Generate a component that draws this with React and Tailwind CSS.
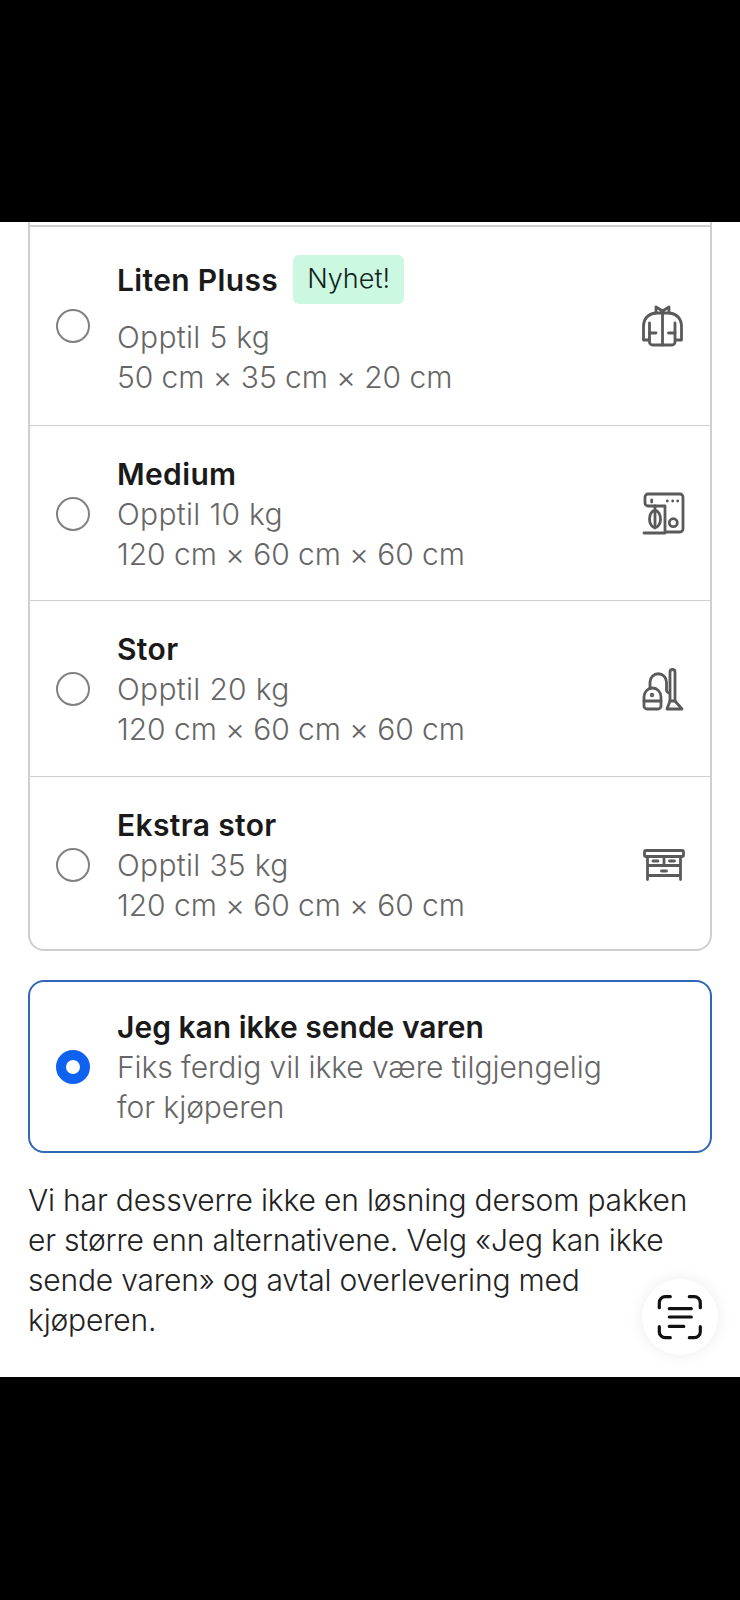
const font = { fontFamily: '"Inter", "Liberation Sans", sans-serif' };

const Jacket = () => (
  <svg width="48" height="48" viewBox="20 12 48 48" fill="none" stroke="#5a5a5a" strokeWidth="2.8" strokeLinejoin="round" strokeLinecap="round">
    <path d="M36 17 L42.5 21 L49 17 V23 H36 Z" />
    <path d="M36 23 C28 24 23.5 29 23.5 37 V50 H29.5 V33 M29.5 50 V52 a3 3 0 0 0 3 3 H52 a3 3 0 0 0 3 -3 V33 M55 50 H61.5 V37 C61.5 29 57 24 49 23" />
    <path d="M42.5 23 V55 M29.5 43 H36 M48.5 43 H55" />
  </svg>
);

const Mixer = () => (
  <svg width="48" height="48" viewBox="20 9 48 48" fill="none" stroke="#5a5a5a" strokeWidth="2.8" strokeLinejoin="round" strokeLinecap="round">
    <path d="M25 22 V16 a3 3 0 0 1 3 -3 H60 a3 3 0 0 1 3 3 V48 a3 3 0 0 1 -3 3 H45 V25 H28 a3 3 0 0 1 -3 -3 Z" />
    <path d="M24 52 H45 M35 25 V47" />
    <ellipse cx="35" cy="38" rx="5.5" ry="8.5" />
    <circle cx="53.3" cy="41.7" r="4" />
    <path d="M31.7 19 V21 M47.3 20 V20.1 M52.7 20 V20.1 M57.7 20 V20.1" />
  </svg>
);

const Vacuum = () => (
  <svg width="48" height="48" viewBox="20 5 48 48" fill="none" stroke="#5a5a5a" strokeWidth="2.8" strokeLinejoin="round" strokeLinecap="round">
    <path d="M24 37 a8.5 9 0 0 1 17 0 V46 a3 3 0 0 1 -3 3 H27 a3 3 0 0 1 -3 -3 Z" />
    <path d="M24 41 H41" />
    <circle cx="32" cy="35" r="0.8" fill="#5a5a5a" />
    <path d="M30 28.5 V22 a8 8 0 0 1 16.5 0 V30 a3 3 0 0 0 3 3" />
    <path d="M50 41 V12 a2.5 2.5 0 0 1 5 0 V41" />
    <path d="M47 49 L50 41 H55 L62 49 Z" />
  </svg>
);

const Dresser = () => (
  <svg width="48" height="48" viewBox="19.5 5.5 48 48" fill="none" stroke="#5a5a5a" strokeWidth="2.8" strokeLinejoin="round" strokeLinecap="round">
    <rect x="24" y="15" width="39" height="6" rx="1.5" />
    <path d="M27 21 V44 M60 21 V44 M27 30 H60 M27 40 H60 M43.5 21 V30" />
    <path d="M32.5 25.5 H37.5 M49 25.5 H54 M41 35.5 H46" />
  </svg>
);

const Radio = ({ checked }) =>
  checked ? (
    <div className="w-[34px] h-[34px] shrink-0 rounded-full border-[10px] border-[#0f62f0] bg-white" />
  ) : (
    <div className="w-[34px] h-[34px] shrink-0 rounded-full border-2 border-[#808080] bg-white" />
  );

const Row = ({ title, badge, lines, icon, bottom }) => (
  <div className={`flex items-center pl-[26px] pr-[22px] pt-7 ${bottom}`}>
    <Radio />
    <div className="ml-[27px] flex-1 min-w-0">
      <div className={`flex items-center ${badge ? "mb-[13px]" : ""}`}>
        <span className="text-[30px] leading-10 font-semibold text-[#1a1a1a] tracking-[0.35px]">{title}</span>
        {badge && (
          <span className="ml-[15px] h-[49px] px-[14px] flex items-center rounded-md bg-[#ccf8e2] text-[27px] font-[350] text-[#10241c]">
            {badge}
          </span>
        )}
      </div>
      <div className="text-[30px] leading-10 font-[350] text-[#666666] tracking-[0.3px]">{lines[0]}</div>
      <div className="text-[30px] leading-10 font-[350] text-[#666666] tracking-[-0.05px]">{lines[1]}</div>
    </div>
    <div className="w-12 h-12 shrink-0">{icon}</div>
  </div>
);

export default function App() {
  return (
    <div className="w-[740px] h-[1600px] bg-black flex flex-col" style={font}>
      <div className="h-[222px] shrink-0" />
      <div className="relative h-[1155px] shrink-0 bg-white overflow-hidden px-[28px]">
        <div className="border-x-2 border-b-2 border-[#cfcfcf] rounded-b-2xl w-[684px]">
          <div className="h-[5px] border-b-2 border-[#cfcfcf]" />
          <Row title="Liten Pluss" badge="Nyhet!" lines={["Opptil 5 kg", "50 cm × 35 cm × 20 cm"]} icon={<Jacket />} bottom="pb-7 border-b border-[#cfcfcf]" />
          <Row title="Medium" lines={["Opptil 10 kg", "120 cm × 60 cm × 60 cm"]} icon={<Mixer />} bottom="pb-[26px] border-b border-[#cfcfcf]" />
          <Row title="Stor" lines={["Opptil 20 kg", "120 cm × 60 cm × 60 cm"]} icon={<Vacuum />} bottom="pb-[27px] border-b border-[#cfcfcf]" />
          <Row title="Ekstra stor" lines={["Opptil 35 kg", "120 cm × 60 cm × 60 cm"]} icon={<Dresser />} bottom="pb-6" />
        </div>
        <div className="mt-[29px] w-[684px] h-[173px] border-2 border-[#2f68b8] rounded-2xl flex items-center pl-[26px] pr-[96px]">
          <Radio checked />
          <div className="ml-[27px] flex-1 min-w-0">
            <div className="text-[30px] leading-10 font-semibold text-[#1a1a1a]">Jeg kan ikke sende varen</div>
            <div className="text-[30px] leading-10 font-[350] text-[#666666] tracking-[-0.06px]">Fiks ferdig vil ikke være tilgjengelig for kjøperen</div>
          </div>
        </div>
        <p className="mt-[27px] w-[670px] text-[30px] leading-10 font-[350] text-[#222222] tracking-[-0.18px]">
          Vi har dessverre ikke en løsning dersom pakken er større enn alternativene. Velg «Jeg kan ikke sende varen» og avtal overlevering med kjøperen.
        </p>
        <div className="absolute left-[642px] top-[1057px] w-[76px] h-[76px] rounded-full bg-white shadow-[0_0_16px_rgba(0,0,0,0.08)] flex items-center justify-center">
          <svg width="48" height="48" viewBox="36.7 33.3 48 48" fill="none" stroke="#111" strokeWidth="3.2" strokeLinecap="round">
            <path d="M51 37 H46 a6 6 0 0 0 -6 6 V48 M70 37 H75 a6 6 0 0 1 6 6 V48 M40 67 V72 a6 6 0 0 0 6 6 H51 M81 67 V72 a6 6 0 0 1 -6 6 H70" />
            <path d="M50 49 H72 M50 57.3 H72 M50 66.7 H64.5" />
          </svg>
        </div>
      </div>
    </div>
  );
}
